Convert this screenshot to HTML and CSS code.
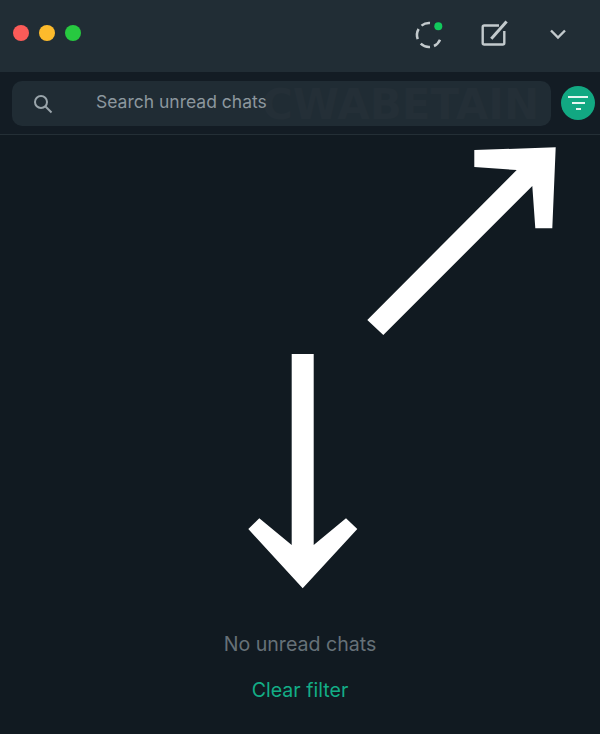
FILE: index.html
```html
<!DOCTYPE html>
<html lang="en">
<head>
    <meta charset="UTF-8">
    <meta name="viewport" content="width=device-width, initial-scale=1.0">
    <title>Unread chats</title>
    <link rel="stylesheet" href="styles.css">
</head>
<body>
    <div class="app">
        <div class="titlebar">
            <div class="lights">
                <span class="light red"></span>
                <span class="light yellow"></span>
                <span class="light green"></span>
            </div>
            <div class="actions">
                <svg class="status-icon" width="32" height="32" viewBox="0 0 32 32" fill="none" stroke="#c3cacd" stroke-width="2.5">
                    <path d="M4.7 20.1A12 12 0 0 1 5.6 10"/>
                    <path d="M8.5 6.6A12 12 0 0 1 17 4"/>
                    <path d="M7.7 24.7A12 12 0 0 0 17 28"/>
                    <path d="M21 27A12 12 0 0 0 27 20.7"/>
                    <circle cx="25.3" cy="7.3" r="4" fill="#12c95c" stroke="none"/>
                </svg>
                <svg class="new-icon" width="30" height="30" viewBox="0 0 30 30" fill="none" stroke="#c3cacd" stroke-width="2.4">
                    <path d="M20 6.5H5.2a1.5 1.5 0 0 0-1.5 1.5v16a1.5 1.5 0 0 0 1.5 1.5h18.6a1.5 1.5 0 0 0 1.5-1.5V12"/>
                    <path d="M12.3 19.7 27.6 2.4" stroke-width="3"/>
                </svg>
                <svg class="chevron" width="18" height="12" viewBox="0 0 18 12" fill="none" stroke="#c3cacd" stroke-width="2.4">
                    <path d="M2 2.5 9 9.5 16 2.5"/>
                </svg>
            </div>
        </div>

        <div class="search-row">
            <div class="search-box">
                <svg class="search-icon" width="20" height="20" viewBox="0 0 20 20" fill="none" stroke="#9aa5ab" stroke-width="2">
                    <circle cx="8" cy="8" r="6"/>
                    <path d="M12.5 12.5 18.5 18.5"/>
                </svg>
                <span class="search-text">Search unread chats</span>
                <span class="watermark">CWABETAIN</span>
            </div>
            <div class="filter-btn">
                <span class="filter-line long"></span>
                <span class="filter-line mid"></span>
                <span class="filter-line short"></span>
            </div>
        </div>

        <div class="empty">
            <p class="empty-text">No unread chats</p>
            <a href="#" class="clear-link">Clear filter</a>
        </div>

        <svg class="arrows" width="600" height="734" viewBox="0 0 600 734" fill="#fff">
            <polygon points="555.7,147.3 474.3,150 474.3,167 516.7,170 367.3,320 383.3,335 532.3,186 535.3,228.3 552.3,228.3"/>
            <polygon points="291.7,354 313.7,354 313.7,545 346,518.3 357.3,529 302.7,588.3 248.3,529 259.3,518.3 291.7,545"/>
        </svg>
    </div>
</body>
</html>
```

FILE: styles.css
```css
html, body {
    margin: 0;
    padding: 0;
}
body {
    font-family: Inter, "Liberation Sans", sans-serif;
    background-color: #111a21;
}
.app {
    position: relative;
    width: 600px;
    height: 734px;
    display: flex;
    flex-direction: column;
    overflow: hidden;
    background-color: #111a21;
}
.titlebar {
    height: 72px;
    flex: none;
    display: flex;
    align-items: center;
    justify-content: space-between;
    padding: 0 33px 4px 13px;
    box-sizing: border-box;
    background-color: #212d35;
}
.lights {
    display: flex;
    gap: 10px;
    margin-bottom: 2px;
}
.light {
    width: 16px;
    height: 16px;
    border-radius: 50%;
}
.light.red {
    background-color: #fb5b58;
}
.light.yellow {
    background-color: #fdbb2c;
}
.light.green {
    background-color: #27c940;
}
.actions {
    display: flex;
    align-items: center;
}
.status-icon {
    margin-right: 34px;
    margin-top: 1px;
}
.new-icon {
    margin-right: 40px;
}
.search-row {
    height: 63px;
    flex: none;
    display: flex;
    align-items: center;
    padding: 0 5px 0 12px;
    box-sizing: border-box;
    border-bottom: 1px solid #242f36;
    background-color: #131c24;
}
.search-box {
    position: relative;
    flex: 1;
    height: 45px;
    margin-top: 1px;
    display: flex;
    align-items: center;
    padding-left: 21px;
    border-radius: 10px;
    background-color: #202c34;
}
.search-icon {
    flex: none;
}
.search-text {
    position: relative;
    z-index: 1;
    margin-left: 43px;
    margin-bottom: 4px;
    font-size: 17.5px;
    color: #8c979e;
}
.watermark {
    position: absolute;
    left: 250px;
    top: 1px;
    font-family: "DejaVu Sans", sans-serif;
    font-weight: bold;
    font-size: 42px;
    line-height: 45px;
    white-space: nowrap;
    color: #242f37;
}
.filter-btn {
    width: 34px;
    height: 34px;
    flex: none;
    margin-left: 10px;
    display: flex;
    flex-direction: column;
    align-items: center;
    justify-content: center;
    gap: 4px;
    border-radius: 50%;
    background-color: #12a882;
}
.filter-line {
    height: 2px;
    background-color: #e6f6f1;
}
.filter-line.long {
    width: 20px;
}
.filter-line.mid {
    width: 13px;
}
.filter-line.short {
    width: 5px;
}
.empty {
    flex: 1;
    display: flex;
    flex-direction: column;
    align-items: center;
    padding-top: 496px;
}
.empty-text {
    margin: 0;
    font-size: 19.6px;
    line-height: 26px;
    color: #667178;
}
.clear-link {
    margin-top: 20px;
    font-size: 19.6px;
    line-height: 26px;
    color: #13ad86;
    text-decoration: none;
}
.arrows {
    position: absolute;
    left: 0;
    top: 0;
}
```
